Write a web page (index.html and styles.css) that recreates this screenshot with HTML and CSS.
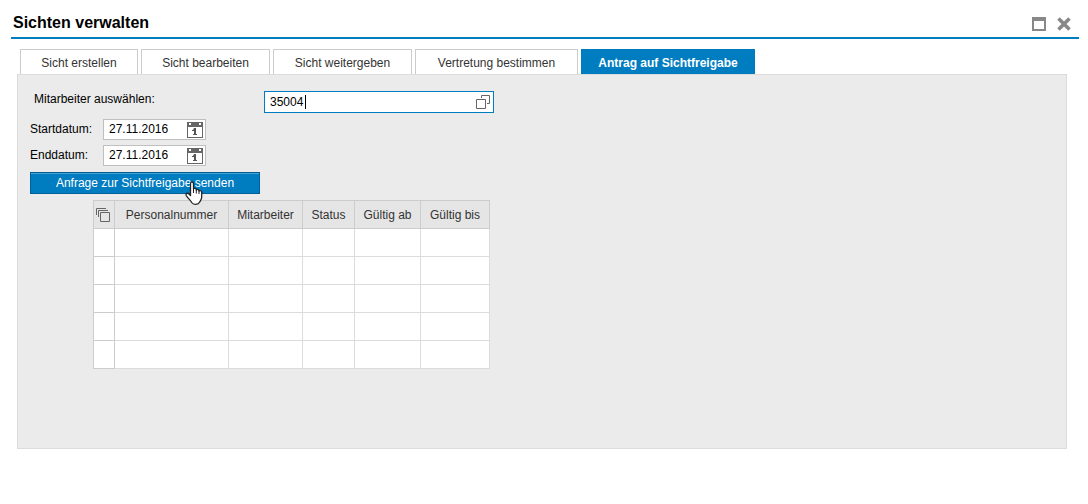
FILE: index.html
```html
<!DOCTYPE html>
<html lang="de">
<head>
    <meta charset="UTF-8">
    <meta name="viewport" content="width=device-width, initial-scale=1.0">
    <title>Sichten verwalten</title>
    <link rel="stylesheet" href="styles.css">
</head>
<body>
    <header class="titlebar">
        <h1>Sichten verwalten</h1>
        <div class="window-buttons">
            <button type="button" aria-label="Maximieren">
                <svg width="14" height="14" viewBox="0 0 14 14"><path fill="#888" fill-rule="evenodd" d="M0 0h14v14H0zM2 4v8h10V4z"/></svg>
            </button>
            <button type="button" aria-label="Schließen">
                <svg width="14" height="14" viewBox="0 0 14 14"><path fill="none" stroke="#888" stroke-width="3.600" d="M1.500 1.500l11 11M12.500 1.500l-11 11"/></svg>
            </button>
        </div>
    </header>

    <main>
        <nav class="tabs">
            <button type="button" class="tab">Sicht erstellen</button>
            <button type="button" class="tab">Sicht bearbeiten</button>
            <button type="button" class="tab">Sicht weitergeben</button>
            <button type="button" class="tab">Vertretung bestimmen</button>
            <button type="button" class="tab active">Antrag auf Sichtfreigabe</button>
        </nav>

        <form class="panel" id="requestForm">
            <div class="employee-row">
                <label for="employee">Mitarbeiter auswählen:</label>
                <div class="field employee-field">
                    <input type="text" id="employee" name="employee" value="35004">
                    <span class="caret"></span>
                    <button type="button" class="field-icon" aria-label="Wertehilfe">
                        <svg width="14" height="14" viewBox="0 0 14 14"><path fill="none" stroke="#666" d="M.5 4.500h9v9h-9zM5.500 3V.5h8v8H11"/></svg>
                    </button>
                </div>
            </div>

            <div class="date-row">
                <label for="start">Startdatum:</label>
                <div class="field">
                    <input type="text" id="start" name="start" value="27.11.2016">
                    <button type="button" class="field-icon" aria-label="Kalender">
                        <svg width="16" height="16" viewBox="0 0 16 16"><path fill="#666" fill-rule="evenodd" d="M0 0h16v16H0zM1 5v10h14V5zM2 1v2h2V1zM12 1v2h2V1z"/><path fill="#555" d="M7 6h2v6h1v1H6v-1h1V9H5V8h1z"/></svg>
                    </button>
                </div>
            </div>
            <div class="date-row">
                <label for="end">Enddatum:</label>
                <div class="field">
                    <input type="text" id="end" name="end" value="27.11.2016">
                    <button type="button" class="field-icon" aria-label="Kalender">
                        <svg width="16" height="16" viewBox="0 0 16 16"><path fill="#666" fill-rule="evenodd" d="M0 0h16v16H0zM1 5v10h14V5zM2 1v2h2V1zM12 1v2h2V1z"/><path fill="#555" d="M7 6h2v6h1v1H6v-1h1V9H5V8h1z"/></svg>
                    </button>
                </div>
            </div>

            <div class="send-row">
                <button type="button" class="send">Anfrage zur Sichtfreigabe senden</button>
                <svg class="pointer" width="18" height="24" viewBox="0 0 18 24"><path fill="#fff" stroke="#222" stroke-width="1.300" stroke-linejoin="round" d="M5.500 14.500V2.500C5.500.500 8.500.500 8.500 2.500V8C9 7 11.300 7.300 11.300 9 12 8 14 8.500 14 10c.8-.8 2.700-.3 2.700 1.300V16c0 2-1.200 3.500-2 5-1.500 3-6.500 3-8 .5C5.500 19 3 17.500 1.200 14.500.500 12.500 2.500 11.500 4 13z"/><path fill="none" stroke="#222" d="M8.500 8v4M11.300 9v3.500M14 10v3"/></svg>
            </div>

            <table class="requests">
                <thead>
                    <tr>
                        <th class="select">
                            <svg width="14" height="14" viewBox="0 0 14 14"><path fill="none" stroke="#666" d="M4.500 4.500h9v9h-9zM2.500 9V2.500H12M.5 7V.5H10"/></svg>
                        </th>
                        <th class="number">Personalnummer</th>
                        <th class="name">Mitarbeiter</th>
                        <th class="status">Status</th>
                        <th class="from">Gültig ab</th>
                        <th class="to">Gültig bis</th>
                    </tr>
                </thead>
                <tbody>
                    <tr><td></td><td></td><td></td><td></td><td></td><td></td></tr>
                    <tr><td></td><td></td><td></td><td></td><td></td><td></td></tr>
                    <tr><td></td><td></td><td></td><td></td><td></td><td></td></tr>
                    <tr><td></td><td></td><td></td><td></td><td></td><td></td></tr>
                    <tr><td></td><td></td><td></td><td></td><td></td><td></td></tr>
                </tbody>
            </table>
        </form>
    </main>
</body>
</html>
```
FILE: styles.css
```css
* {
    box-sizing: border-box;
}

body {
    margin: 0;
    background: #fff;
    color: #000;
    font-family: Arial, "Liberation Sans", sans-serif;
    font-size: 12px;
    line-height: 16px;
}

button, input {
    font: inherit;
    color: inherit;
    margin: 0;
}

svg {
    display: block;
}

/* Title bar */
.titlebar {
    display: flex;
    justify-content: space-between;
    align-items: center;
    margin: 0 9px 0 11px;
    padding: 9px 8px 0 2px;
    height: 39px;
    border-bottom: 2px solid #007cc0;
}

h1 {
    margin: 0;
    font-size: 16px;
    line-height: 20px;
}

.window-buttons {
    display: flex;
    gap: 11px;
    padding-top: 2px;
}

.window-buttons button {
    padding: 0;
    border: none;
    background: none;
}

main {
    padding: 10px 21px 0 17px;
}

/* Tabs */
.tabs {
    display: grid;
    grid-template-columns: 118px 129px 139px 163px 174px;
    gap: 3px;
    padding-left: 3px;
}

.tab {
    height: 25px;
    padding: 1px 0 0;
    border: 1px solid #ccc;
    border-bottom: none;
    background: #fff;
    color: #333;
    white-space: nowrap;
}

.tab.active {
    border-color: #007cc0;
    background: #007cc0;
    color: #fff;
    font-weight: bold;
}

/* Form */
.panel {
    padding: 16px 12px 79px;
    border: 1px solid #dcdcdc;
    background: #ebebeb;
}

.employee-row {
    display: flex;
    padding-left: 4px;
    margin-bottom: 6px;
}

.employee-row label {
    width: 230px;
}

.date-row {
    display: flex;
    align-items: center;
    margin-bottom: 5px;
}

.date-row label {
    width: 73px;
    padding-bottom: 2px;
}

.field {
    position: relative;
    display: flex;
    align-items: center;
    width: 103px;
    height: 21px;
    padding: 0 2px 0 5px;
    border: 1px solid #bfbfbf;
    background: #fff;
}

.employee-field {
    width: 230px;
    height: 22px;
    padding-right: 3px;
    border-color: #007cc0;
}

.field input {
    flex: 1;
    min-width: 0;
    padding: 0;
    border: none;
    outline: none;
    background: none;
}

.date-row input {
    padding-bottom: 2px;
}

.caret {
    position: absolute;
    left: 40px;
    top: 3px;
    width: 1px;
    height: 14px;
    background: #000;
}

.field-icon {
    padding: 0;
    border: none;
    background: none;
}

.send-row {
    position: relative;
    display: flex;
    padding-top: 1px;
    margin-bottom: 6px;
}

.send {
    width: 230px;
    height: 22px;
    padding: 0;
    border: 1px solid #006199;
    border-top-color: #005a94;
    background: #007cc0;
    box-shadow: inset 0 1px #4ba3d4;
    color: #fff;
}

.pointer {
    position: absolute;
    left: 155px;
    top: 10px;
}

/* Request table */
.requests {
    width: 397px;
    margin-left: 63px;
    table-layout: fixed;
    border-collapse: collapse;
    background: #fff;
}

.requests th, .requests td {
    height: 28px;
    padding: 0;
    border: 1px solid #dcdcdc;
}

.requests th {
    background: #e5e5e5;
    border-color: #ccc;
    color: #333;
    font-weight: normal;
}

.requests td:first-child {
    border-color: #ccc;
}

.requests th svg {
    margin: 0 2px;
}

.select {
    width: 21px;
}

.number {
    width: 114px;
}

.name {
    width: 74px;
}

.status {
    width: 52px;
}

.from {
    width: 66px;
}

.to {
    width: 69px;
}
```
